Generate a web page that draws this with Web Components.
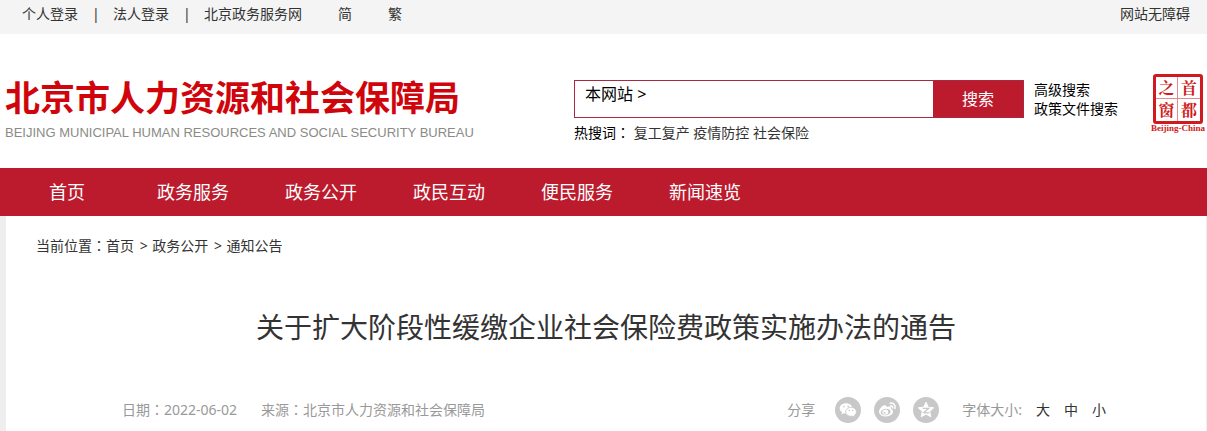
<!DOCTYPE html>
<html lang="zh-CN">
<head>
<meta charset="utf-8">
<title>关于扩大阶段性缓缴企业社会保险费政策实施办法的通告</title>
<style>
    body {
        margin: 0;
        background: #eeeeee;
        color: #333;
        font: 14px/20px "Noto Sans", "Noto Sans CJK SC", sans-serif;
        --red: #bc1b2d;
        /* has the full-width colon in the middle of its box */
        --colon-font: "Noto Sans CJK TC", sans-serif;
    }
</style>
</head>
<body>
<top-bar></top-bar>
<site-header></site-header>
<main-nav>
    <nav-item href="#home" class="home">首页</nav-item>
    <nav-item href="#service">政务服务</nav-item>
    <nav-item href="#open">政务公开</nav-item>
    <nav-item href="#interact">政民互动</nav-item>
    <nav-item href="#convenience">便民服务</nav-item>
    <nav-item href="#news">新闻速览</nav-item>
</main-nav>
<article-panel>
    <crumb-trail slot="crumbs"></crumb-trail>
    <span slot="title">关于扩大阶段性缓缴企业社会保险费政策实施办法的通告</span>
    <article-meta slot="meta">
        <span slot="date">2022-06-02</span>
        <span slot="source">北京市人力资源和社会保障局</span>
    </article-meta>
</article-panel>

<script>
// every element clones its own markup into an open shadow root
function define(name, html) {
    const template = document.createElement("template")
    template.innerHTML = html
    customElements.define(name, class extends HTMLElement {
        constructor() {
            super()
            const shadow = this.attachShadow({ mode: "open" })
            shadow.append(template.content.cloneNode(true))
        }
    })
}

// grey bar with the login links
define("top-bar", `
<style>
    :host {
        display: flex;
        justify-content: space-between;
        padding: 4px 17px 10px 22px;
        background: #f4f4f4;
        white-space: nowrap;
    }
    nav { display: flex; gap: 14px; }
    .sep { width: 7px; text-align: center; }
    .lang { margin-left: 22px; }
    a { color: inherit; text-decoration: none; }
</style>
<nav>
    <a href="#person">个人登录</a>
    <span class="sep">|</span>
    <a href="#company">法人登录</a>
    <span class="sep">|</span>
    <a href="#portal">北京政务服务网</a>
    <a class="lang" href="#hans">简</a>
    <a class="lang" href="#hant">繁</a>
</nav>
<a href="#accessible">网站无障碍</a>
`)

define("site-header", `
<style>
    :host {
        display: grid;
        grid-template-columns: minmax(480px, 574px) 450px 1fr auto;
        align-items: start;
        padding: 40px 2px 25px 0;
        background: #fff;
    }
    site-logo { margin-top: 4px; }
    search-box { margin-top: 6px; }
    .more {
        display: grid;
        margin: 6px 0 0 10px;
        color: #000;
        line-height: 19px;
        white-space: nowrap;
    }
    .more a { color: inherit; text-decoration: none; }
</style>
<site-logo></site-logo>
<search-box></search-box>
<div class="more">
    <a href="#advanced">高级搜索</a>
    <a href="#policy">政策文件搜索</a>
</div>
<capital-seal></capital-seal>
`)

define("site-logo", `
<style>
    :host { display: block; padding-left: 5px; white-space: nowrap; }
    .cn {
        color: #d0050b;
        font-size: 35px;
        line-height: 40px;
        font-weight: 700;
    }
    .en {
        margin-top: 7px;
        color: #8b8b86;
        font: 13px/16px "Liberation Sans", Arial, sans-serif;
    }
</style>
<div class="cn">北京市人力资源和社会保障局</div>
<div class="en">BEIJING MUNICIPAL HUMAN RESOURCES AND SOCIAL SECURITY BUREAU</div>
`)

define("search-box", `
<style>
    :host { display: block; }
    form {
        display: flex;
        height: 38px;
        box-sizing: border-box;
        border: 1px solid #ab2840;
        background: #fff;
    }
    button, input {
        border: 0;
        padding: 0;
        background: none;
        font: inherit;
        font-size: 16px;
    }
    .scope { align-self: flex-start; padding: 3px 10px; color: #000; }
    input { flex: 1; min-width: 0; outline: 0; }
    .go { width: 90px; background: var(--red); color: #fff; }
    p { margin: 0; padding-top: 5px; color: #000; }
    p a { color: #333; text-decoration: none; }
    .colon { font-family: var(--colon-font); line-height: 1; }
</style>
<form>
    <button class="scope" type="button">本网站 &gt;</button>
    <input type="text" aria-label="搜索">
    <button class="go" type="button">搜索</button>
</form>
<p>热搜词<span class="colon" lang="zh-TW">：</span> <a href="#w1">复工复产</a> <a href="#w2">疫情防控</a> <a href="#w3">社会保险</a></p>
`)

// red seal, read from the right column to the left
define("capital-seal", `
<style>
    :host { display: grid; justify-items: center; color: #cf1a20; }
    .seal {
        display: grid;
        grid-template-columns: 22px 22px;
        grid-template-rows: 22px 22px;
        border: 3px solid;
        border-radius: 3px;
        font: 700 16px/21px "Noto Serif CJK SC", "Noto Sans CJK SC", serif;
        text-align: center;
    }
    .left { border-right: 1px solid #e58a8c; }
    .top { border-bottom: 1px solid #e58a8c; }
    small { font: 700 9px/8px "Liberation Serif", serif; }
</style>
<div class="seal">
    <span class="left top">之</span><span class="top">首</span>
    <span class="left">窗</span><span>都</span>
</div>
<small>Beijing-China</small>
`)

define("main-nav", `
<style>
    :host { display: block; background: var(--red); }
    nav { display: flex; padding-left: 21px; }
    ::slotted(.home) { margin-right: 16px; }
</style>
<nav><slot></slot></nav>
`)

customElements.define("nav-item", class extends HTMLElement {
    constructor() {
        super()
        const shadow = this.attachShadow({ mode: "open" })
        shadow.innerHTML = `
        <style>
            :host { display: block; }
            a {
                display: block;
                padding: 0 28px;
                color: #fff;
                font-size: 18px;
                line-height: 48px;
                text-decoration: none;
                white-space: nowrap;
            }
        </style>
        <a><slot></slot></a>`
        shadow.querySelector("a").href = this.getAttribute("href")
    }
})

define("crumb-trail", `
<style>
    :host { display: block; }
    a { color: inherit; text-decoration: none; }
    .gt { margin: 0 1px 0 2px; }
    .colon { font-family: var(--colon-font); line-height: 1; }
</style>
<nav>当前位置<span class="colon" lang="zh-TW">：</span><a href="#home">首页</a> <span class="gt">&gt;</span> <a href="#open">政务公开</a> <span class="gt">&gt;</span> <a href="#notice">通知公告</a></nav>
`)

define("article-panel", `
<style>
    :host {
        display: block;
        margin: 0 1px 0 6px;
        padding: 20px 0 8px;
        background: #fff;
    }
    .crumbs { padding-left: 30px; }
    h1 {
        margin: 51px 0 50px;
        font-size: 28px;
        line-height: 40px;
        font-weight: 400;
        text-align: center;
    }
</style>
<div class="crumbs"><slot name="crumbs"></slot></div>
<h1><slot name="title"></slot></h1>
<slot name="meta"></slot>
`)

define("article-meta", `
<style>
    :host {
        display: flex;
        align-items: center;
        justify-content: space-between;
        padding: 0 100px 0 116px;
        color: #999;
        white-space: nowrap;
    }
    .info, .tools, .sizes { display: flex; align-items: center; }
    .info { gap: 24px; }
    .sizes { gap: 14px; }
    share-icons { margin: 0 23px 0 20px; }
    .colon { font-family: var(--colon-font); line-height: 1; }
    button {
        border: 0;
        padding: 0;
        background: none;
        color: #333;
        font: inherit;
    }
</style>
<div class="info">
    <span>日期<span class="colon" lang="zh-TW">：</span><slot name="date"></slot></span>
    <span>来源<span class="colon" lang="zh-TW">：</span><slot name="source"></slot></span>
</div>
<div class="tools">
    <span>分享</span>
    <share-icons></share-icons>
    <div class="sizes">
        <span>字体大小:</span>
        <button type="button">大</button>
        <button type="button">中</button>
        <button type="button">小</button>
    </div>
</div>
`)

// wechat, weibo and qzone
define("share-icons", `
<style>
    :host { display: flex; gap: 13px; }
    a { display: block; height: 26px; }
    svg { display: block; width: 26px; height: 26px; }
    .disc, .cut { fill: #c8c8c8; }
    .ink { fill: #fff; }
    .line { fill: none; stroke: #fff; stroke-width: 1.5; stroke-linecap: round; }
</style>
<a href="#wechat" aria-label="微信">
    <svg viewBox="0 0 26 26">
        <circle class="disc" cx="13" cy="13" r="13"/>
        <path class="ink" d="M11 6.2c-3.6 0-6.3 2.2-6.3 5.1 0 1.7.9 3.1 2.4 4l-.7 2.1 2.5-1.2c.7.2 1.4.2 2.1.2 3.6 0 6.3-2.2 6.3-5.1S14.6 6.2 11 6.2z"/>
        <path class="ink" stroke="#c8c8c8" stroke-width=".8" d="M16 10.3c-3.1 0-5.4 2-5.4 4.5s2.3 4.5 5.4 4.5c.6 0 1.2-.1 1.8-.2l2.1 1.1-.6-1.9c1.3-.8 2.1-2 2.1-3.5 0-2.5-2.3-4.5-5.4-4.5z"/>
        <circle class="cut" cx="9" cy="9.7" r=".8"/>
        <circle class="cut" cx="13.2" cy="9.4" r=".8"/>
        <circle class="cut" cx="14.3" cy="13.5" r=".7"/>
        <circle class="cut" cx="17.8" cy="13.5" r=".7"/>
    </svg>
</a>
<a href="#weibo" aria-label="微博">
    <svg viewBox="0 0 26 26">
        <circle class="disc" cx="13" cy="13" r="13"/>
        <path class="ink" d="M11.5 8.5c-1.4-.6-3.8.9-5.1 2.7-1.2 1.5-1.7 3-1.3 4.5.7 2.5 3.7 3.9 7 3.7 4-.2 6.9-2.5 6.9-5 0-1.4-1-2.1-2.2-2.5.6-1.7-.4-2.5-2-2.3-.8.1-1.5.4-2.1.6.3-.9-.1-1.4-1.2-1.7z"/>
        <ellipse class="cut" cx="11.7" cy="15" rx="5" ry="3.3" transform="rotate(-8 11.7 15)"/>
        <ellipse class="ink" cx="11.3" cy="15.2" rx="3" ry="2.5" transform="rotate(-15 11.3 15.2)"/>
        <circle class="cut" cx="10.6" cy="15.7" r="1"/>
        <path class="line" d="M16.2 6.2c3.2-.6 5.5 1.9 4.8 5.2M16.6 8.9c1.4-.2 2.3.8 2 2.2"/>
    </svg>
</a>
<a href="#qzone" aria-label="QQ空间">
    <svg viewBox="0 0 26 26">
        <circle class="disc" cx="13" cy="13" r="13"/>
        <path class="ink" stroke="#fff" stroke-linejoin="round" d="M13 5.2l2.3 5 5.4.6-4 3.7 1.1 5.3-4.8-2.7-4.8 2.7 1.1-5.3-4-3.7 5.4-.6z"/>
        <path fill="none" stroke="#c8c8c8" stroke-width="1.3" d="M9.8 11.4h5.8l-4.7 4.1c1.6.4 3.6.4 5.4.1"/>
    </svg>
</a>
`)
</script>
</body>
</html>
